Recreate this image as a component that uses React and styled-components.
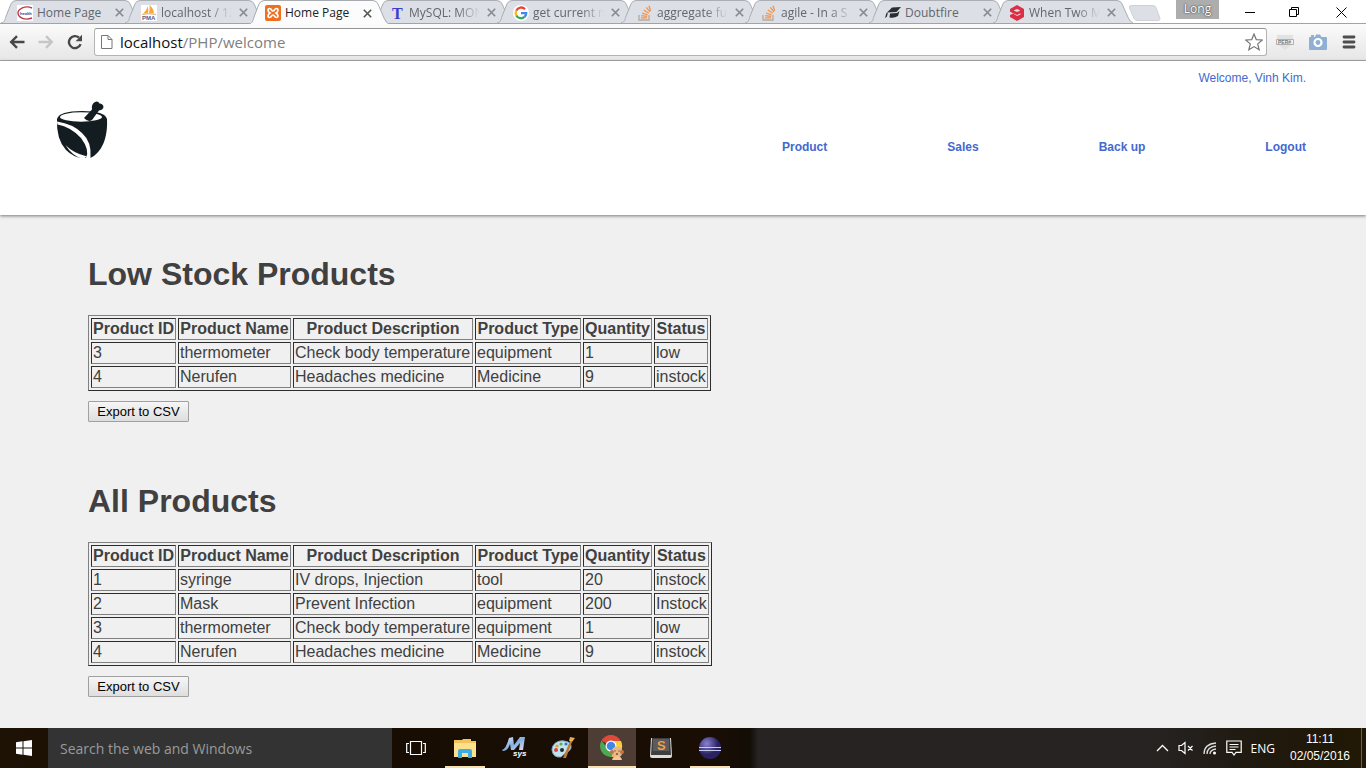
import React from "react";
import styled, { createGlobalStyle } from "styled-components";

const GlobalStyle = createGlobalStyle`
  * { box-sizing: border-box; }
  body { margin: 0; background: #f0f0f0; font-family: "Liberation Sans", Arial, sans-serif; }
`;

const ui = `"Open Sans", "Noto Sans", sans-serif`;

const Screen = styled.div`
  min-height: 100vh;
  display: flex;
  flex-direction: column;
`;

/* Browser window */
const TabStrip = styled.div`
  height: 24px;
  display: flex;
  padding-left: 9px;
  background: #fff;
  border-bottom: 1px solid #a3a3a3;
  font-family: ${ui};
`;

const TabBox = styled.div`
  position: relative;
  flex: 0 1 124px;
  min-width: 0;
  height: ${(p) => (p.$active ? 24 : 23)}px;
  display: flex;
  align-items: center;
  padding: 2px 7px 0 8px;
  gap: 4px;
  z-index: ${(p) => (p.$active ? 2 : 0)};
`;

const TabShape = styled.svg`
  position: absolute;
  left: -8px;
  top: 0;
  width: calc(100% + 16px);
  height: 100%;
  z-index: -1;
`;

const Favicon = styled.svg`
  flex: none;
  width: 16px;
  height: 16px;
`;

const TabTitle = styled.span`
  flex: 1;
  min-width: 0;
  overflow: hidden;
  white-space: nowrap;
  font-size: 12px;
  line-height: 16px;
  color: ${(p) => (p.$active ? "#222" : "#63666b")};
  mask-image: ${(p) => (p.$fade ? "linear-gradient(to right, #000 68%, transparent 100%)" : "none")};
`;

const IconButton = styled.button`
  flex: none;
  display: flex;
  align-items: center;
  justify-content: center;
  padding: 0;
  border: 0;
  background: transparent;
  width: ${(p) => p.$w || 14}px;
  height: ${(p) => p.$h || 16}px;
`;

const NewTab = styled.button`
  flex: none;
  width: 34px;
  height: 16px;
  margin: 5px 0 0 2px;
  padding: 0;
  border: 0;
  background: transparent;
`;

const WindowControls = styled.div`
  margin-left: auto;
  display: flex;
  align-items: flex-start;
`;

const ProfileButton = styled.button`
  width: 43px;
  height: 19px;
  margin-right: 8px;
  padding: 0 0 2px;
  border: 0;
  background: #adadad;
  color: #fff;
  font: 12px/16px ${ui};
  text-shadow: 0 0 2px #444, 0 0 1px #444;
`;

const Toolbar = styled.div`
  height: 37px;
  display: flex;
  align-items: center;
  padding: 0 10px 0 8px;
  background: linear-gradient(#fbfbfb, #e6e6e6);
  border-bottom: 1px solid #ababab;
`;

const NavGroup = styled.div`
  display: flex;
  gap: 11px;
  margin-right: 10px;
`;

const AddressBar = styled.div`
  flex: 1;
  height: 28px;
  display: flex;
  align-items: center;
  gap: 6px;
  padding: 0 3px 0 5px;
  background: #fff;
  border: 1px solid #b4b4b4;
  border-top-color: #969696;
  border-radius: 3px;
`;

const Address = styled.div`
  flex: 1;
  font: 15px/20px ${ui};
  color: #808080;
`;

const Host = styled.span`
  color: #111;
`;

const Extensions = styled.div`
  display: flex;
  gap: 15px;
  margin-left: 9px;
`;

/* Page */
const Page = styled.div`
  flex: 1;
  background: #f0f0f0;
  color: #404040;
`;

const Header = styled.header`
  height: 154px;
  display: flex;
  justify-content: space-between;
  padding: 9px 60px 0 56px;
  background: #fff;
  box-shadow: 0 1px 3px rgba(0, 0, 0, 0.5);
`;

const Logo = styled.a`
  display: block;
  width: 52px;
  height: 60px;
  margin-top: 30px;
`;

const HeaderSide = styled.div`
  display: flex;
  flex-direction: column;
  align-items: flex-end;
  gap: 53px;
`;

const HeaderLink = styled.a`
  font-size: 12px;
  line-height: 16px;
  font-weight: ${(p) => (p.$bold ? 700 : 400)};
  color: #4468cf;
  text-decoration: none;
`;

const Menu = styled.nav`
  display: flex;
  gap: 120px;
`;

const Main = styled.main`
  padding: 39px 88px 30px;
`;

const Section = styled.section`
  margin-bottom: 59px;
  &:last-child { margin-bottom: 0; }
`;

const Title = styled.h1`
  margin: 0 0 21px;
  font-size: 32px;
  line-height: 40px;
`;

const Grid = styled.table`
  border-collapse: separate;
  border-spacing: 2px;
  border: 1px solid;
  border-color: #808080 #2c2c2c #2c2c2c #808080;
  font-size: 16px;
  line-height: 18px;
  white-space: nowrap;

  th, td {
    padding: 1px;
    border: 1px solid;
    border-color: #2c2c2c #808080 #808080 #2c2c2c;
    text-align: left;
  }
`;

const HeadCell = styled.th`
  && {
    min-width: ${(p) => p.$w}px;
    text-align: center;
  }
`;

const ExportButton = styled.button`
  display: block;
  min-width: 101px;
  height: 21px;
  margin-top: 10px;
  padding: 0 7px;
  border: 1px solid #a0a0a0;
  border-radius: 1px;
  background: linear-gradient(#f6f6f6, #dedede);
  color: #000;
  font: 13px/18px "Liberation Sans", Arial, sans-serif;
`;

/* Taskbar */
const Taskbar = styled.footer`
  height: 40px;
  display: flex;
  align-items: stretch;
  background: linear-gradient(to right, #1d1204 0, #170d02 380px, #1a0e04 700px, #130d07 750px, #262322 758px, #262322 1150px, #1f190e 1260px, #211804 100%);
  font-family: ${ui};
`;

const SearchBox = styled.input`
  width: 344px;
  min-width: 0;
  padding: 1px 12px 0;
  border: 0;
  border-radius: 0;
  background: #333;
  font: 14px/20px ${ui};
  &::placeholder { color: #9a9a9a; opacity: 1; }
`;

const Apps = styled.div`
  display: flex;
  gap: 1px;
`;

const AppButton = styled.button`
  width: ${(p) => (p.$active ? 48 : 40)}px;
  margin: 0 ${(p) => (p.$active ? 0 : 4)}px;
  padding: 2px 0 0;
  display: flex;
  align-items: center;
  justify-content: center;
  border: 0;
  border-bottom: 2px solid ${(p) => (p.$open ? "#f7dfae" : "transparent")};
  background: ${(p) => (p.$active ? "#4e3d35" : "transparent")};
`;

const Tray = styled.div`
  margin-left: auto;
  display: flex;
  align-items: center;
  gap: 9px;
  color: #fff;
  font-size: 12px;
  line-height: 17px;
`;

const Clock = styled.time`
  width: 72px;
  font-family: "Liberation Sans", Arial, sans-serif;
  text-align: center;
`;

const ShowDesktop = styled.button`
  width: 5px;
  height: 40px;
  margin-left: -4px;
  padding: 0;
  border: 0;
  border-left: 1px solid #6a6452;
  background: transparent;
`;

const favicons = {
  health: (
    <>
      <rect width="16" height="16" fill="#fff" />
      <path d="M15 3C8 0 1 4 1 8s6 8 14 5" fill="none" stroke="#c03a45" strokeWidth="1.400" />
      <text x="3" y="10" fontSize="4" fontWeight="700" fill="#2b4590" fontFamily="Liberation Sans">health</text>
    </>
  ),
  pma: (
    <>
      <rect width="16" height="16" fill="#fff" />
      <path d="M2 8.500Q6 5 6.500 1q1.500 4 .5 7.500zM8 8.500Q9 4 8.500 0 13 4 13 8.500z" fill="#f5a742" />
      <path d="M1 9.500q7-1.500 14 0" stroke="#d9b285" fill="none" />
      <text x="1" y="15" fontSize="6" fontWeight="700" fill="#555a85" fontFamily="Liberation Sans">PMA</text>
    </>
  ),
  xampp: (
    <>
      <rect width="16" height="16" rx="2" fill="#ee6f20" />
      <path d="M4.500 3.500C7 3.500 6 6 8 6s1-2.500 3.500-2.500c2 0 2 3-.5 4.500 2.500 1.500 2.500 4.500.5 4.500C9 12.500 10 10 8 10s-1 2.500-3.500 2.500c-2 0-2-3 .5-4.500-2.500-1.500-2.500-4.500-.5-4.500z" fill="none" stroke="#fff" strokeWidth="1.700" />
    </>
  ),
  tutorial: <text x="3" y="14" fontSize="16" fontWeight="700" fill="#4038cf" fontFamily="Liberation Serif">T</text>,
  google: (
    <>
      <circle cx="8" cy="8" r="8" fill="#fff" />
      <g fill="none" strokeWidth="2.300">
        <path d="M12 4.300A5.200 5.200 0 0 0 3.300 5.600" stroke="#ea4335" />
        <path d="M3.300 5.600a5.200 5.200 0 0 0 0 4.800" stroke="#fbbc05" />
        <path d="M3.300 10.400a5.200 5.200 0 0 0 8.200 1.500" stroke="#34a853" />
        <path d="M11.500 11.900A5 5 0 0 0 13.200 8.200H8" stroke="#4285f4" />
      </g>
    </>
  ),
  stack: (
    <g fill="none" strokeWidth="1.300">
      <path d="M2 10v5h10v-5" stroke="#b5aaa2" />
      <path d="M4 12.800h6M4.200 10.600l6 .7M5 8l5.600 1.800M6.800 5l5 3.300M9.300 2.300l3.800 4.500M12 .8l1.600 5" stroke="#f0944d" />
    </g>
  ),
  cap: (
    <g fill="#2b2d30">
      <path d="M2 7.500 7 2.500 16 2l-4.500 5z" />
      <path d="M5 8.500l7-.4 2.500-2-1.500 5q-4 2.400-8.500 1.400zM1.500 7.800h1.300l-.8 3.700-2 1.500z" />
    </g>
  ),
  gag: (
    <path
      fillRule="evenodd"
      d="M8 0l7 4v8l-7 4-7-4v-2l3-1.400L8 11l3.500-1.600V8.200L8 10 1 6.800V4zM8 4 5 5.200v.6L8 7l3-1.200v-.6z"
      fill="#dc2f45"
    />
  ),
};

const tabs = [
  { icon: "health", title: "Home Page" },
  { icon: "pma", title: "localhost / 12", fade: true },
  { icon: "xampp", title: "Home Page", active: true },
  { icon: "tutorial", title: "MySQL: MON", fade: true },
  { icon: "google", title: "get current m", fade: true },
  { icon: "stack", title: "aggregate fu", fade: true },
  { icon: "stack", title: "agile - In a S", fade: true },
  { icon: "cap", title: "Doubtfire" },
  { icon: "gag", title: "When Two M", fade: true },
];

function Tab({ icon, title, active, fade }) {
  return (
    <TabBox $active={active}>
      <TabShape viewBox="0 0 140 24" preserveAspectRatio="none">
        <path
          d="M0 24C4 23 4 20 5 17L10 4Q11 1 15 .5H124Q128 1 129 4l6 14q2 5 5 6"
          fill={active ? "#fcfcfc" : "#dcdfe6"}
          stroke="#a8abb0"
        />
      </TabShape>
      <Favicon viewBox="0 0 16 16">{favicons[icon]}</Favicon>
      <TabTitle $active={active} $fade={fade}>{title}</TabTitle>
      <IconButton aria-label="Close tab">
        <svg width="9" height="9" viewBox="0 0 9 9">
          <path d="M.8.8l7.400 7.400M8.200.8.8 8.200" stroke={active ? "#555" : "#85888d"} strokeWidth="1.600" />
        </svg>
      </IconButton>
    </TabBox>
  );
}

function Browser() {
  return (
    <div>
      <TabStrip>
        {tabs.map((t, i) => <Tab key={i} {...t} />)}
        <NewTab aria-label="New tab">
          <svg width="34" height="16" viewBox="0 0 34 16">
            <path d="M4 .5h22q2 0 3 2l4 11q0 2-2 2H11q-3 0-4-2L2.500 3Q2 .5 4 .5z" fill="#dcdfe6" stroke="#cfd1d4" />
          </svg>
        </NewTab>
        <WindowControls>
          <ProfileButton>Long</ProfileButton>
          <IconButton $w={45} $h={24} aria-label="Minimize">
            <svg width="10" height="10"><path d="M0 5.500h10" stroke="#000" /></svg>
          </IconButton>
          <IconButton $w={45} $h={24} aria-label="Restore">
            <svg width="11" height="11" fill="none" stroke="#000"><path d="M.5 2.500h7v7h-7zM2.500 2.500v-2h7v7h-2" /></svg>
          </IconButton>
          <IconButton $w={49} $h={24} aria-label="Close">
            <svg width="11" height="11" stroke="#000"><path d="M.5.5l10 10M10.500.5l-10 10" /></svg>
          </IconButton>
        </WindowControls>
      </TabStrip>
      <Toolbar>
        <NavGroup>
          <IconButton $w={18} $h={18} aria-label="Back">
            <svg width="16" height="14" fill="none" stroke="#484848" strokeWidth="2.400"><path d="M15.500 7H2.500M8 1.200 2.200 7 8 12.800" /></svg>
          </IconButton>
          <IconButton $w={18} $h={18} aria-label="Forward">
            <svg width="16" height="14" fill="none" stroke="#c6c6c6" strokeWidth="2.400"><path d="M.5 7h13M8 1.200 13.800 7 8 12.800" /></svg>
          </IconButton>
          <IconButton $w={18} $h={18} aria-label="Reload">
            <svg width="16" height="16" viewBox="0 0 16 16"><path d="M13.600 10.200A6 6 0 1 1 12 3.700" fill="none" stroke="#484848" strokeWidth="2.400" /><path d="M15 .8v6.400H8.600z" fill="#484848" /></svg>
          </IconButton>
        </NavGroup>
        <AddressBar>
          <svg width="14" height="16" fill="#fff" stroke="#777"><path d="M1.500 1.500h6.500l4 4v9H1.500zM8 1.500v4h4" /></svg>
          <Address><Host>localhost</Host>/PHP/welcome</Address>
          <IconButton $w={18} $h={18} aria-label="Bookmark">
            <svg width="18" height="18" viewBox="0 0 18 18"><path d="M9 1l2.300 5.600 6 .4-4.600 3.900 1.500 5.900L9 13.600l-5.200 3.200 1.500-5.900L.7 7l6-.4z" fill="#fff" stroke="#777" strokeWidth="1.200" /></svg>
          </IconButton>
        </AddressBar>
        <Extensions>
          <IconButton $w={18} $h={18} aria-label="Extension">
            <svg width="18" height="18"><path d="M1 2h16v9l-8 6-8-6z" fill="#e2e2e2" /><path d="M.5 6.500h17v5H.5z" fill="#f2f2f2" stroke="#b0b0b0" /><text x="2" y="11" fontSize="5" fontWeight="700" fill="#777" fontFamily="Liberation Sans">PER#</text></svg>
          </IconButton>
          <IconButton $w={18} $h={18} aria-label="Capture">
            <svg width="18" height="18"><path d="M0 5q0-1 1-1h1V2h3v2h1l1-2.500h4L12.500 4H17q1 0 1 1v11q0 1-1 1H1q-1 0-1-1z" fill="#8fb0d3" /><circle cx="9" cy="9.500" r="3.500" fill="none" stroke="#fff" strokeWidth="2.200" /></svg>
          </IconButton>
          <IconButton $w={14} $h={18} aria-label="Menu">
            <svg width="14" height="14" stroke="#4d4d4d" strokeWidth="2.800" strokeLinecap="round"><path d="M2 2h10M2 7h10M2 12h10" /></svg>
          </IconButton>
        </Extensions>
      </Toolbar>
    </div>
  );
}

const columns = [
  { label: "Product ID", width: 85 },
  { label: "Product Name", width: 113 },
  { label: "Product Description", width: 180 },
  { label: "Product Type", width: 106 },
  { label: "Quantity", width: 69 },
  { label: "Status", width: 54 },
];
const lowStock = [
  ["3", "thermometer", "Check body temperature", "equipment", "1", "low"],
  ["4", "Nerufen", "Headaches medicine", "Medicine", "9", "instock"],
];
const allProducts = [
  ["1", "syringe", "IV drops, Injection", "tool", "20", "instock"],
  ["2", "Mask", "Prevent Infection", "equipment", "200", "Instock"],
  ...lowStock,
];

function ProductSection({ title, rows }) {
  return (
    <Section>
      <Title>{title}</Title>
      <Grid>
        <thead>
          <tr>{columns.map((c) => <HeadCell key={c.label} scope="col" $w={c.width}>{c.label}</HeadCell>)}</tr>
        </thead>
        <tbody>
          {rows.map((r) => <tr key={r[0]}>{r.map((c, i) => <td key={i}>{c}</td>)}</tr>)}
        </tbody>
      </Grid>
      <ExportButton>Export to CSV</ExportButton>
    </Section>
  );
}

function MortarLogo() {
  return (
    <svg width="52" height="60" viewBox="0 0 52 60">
      <path d="M1 19Q3 11 26 11T51 19C52 37 46 53 34 58H26Q17 57 10 50 0 39 1 19z" fill="#131c20" />
      <ellipse cx="25" cy="17" rx="21" ry="4.700" fill="#fff" />
      <path d="M28 18 36 9.500Q35 4 39 2q3-1.500 4.500 1.500Q47 3.500 47.500 7q-.5 3-4.500 3.500L36 20q-4 2.500-8-2z" fill="#131c20" />
      <path d="M1 21.500Q17 24 26 33 36 42 34.500 58H30Q34 50 25 38 15 27 1.500 24.500z" fill="#fff" />
      <path d="M9.500 45Q17 53 31 56.500L27 59Q16 56 9.500 45z" fill="#fff" />
    </svg>
  );
}

const appIcons = {
  taskview: <svg width="20" height="16" fill="none" stroke="#fff" strokeWidth="1.200"><path d="M4.500 1.500h11v13h-11zM3 3.500H.7v9H3M17 3.500h2.300v9H17" /></svg>,
  explorer: (
    <svg width="22" height="20"><path d="M0 2h8l1-1h8v2h5v16H0z" fill="#f0c45a" /><path d="M0 5h22v14H0z" fill="#fce08d" /><path d="M4 20v-7q0-2 2-2h10q2 0 2 2v7h-4v-5H8v5z" fill="#3aaee0" /></svg>
  ),
  msys: (
    <svg width="26" height="24" viewBox="0 0 26 24">
      <defs><linearGradient id="msys" x1="0" x2="1" y2="1"><stop stopColor="#e9f2ff" /><stop offset=".5" stopColor="#83aee0" /><stop offset="1" stopColor="#f2dcef" /></linearGradient></defs>
      <path d="M1 14Q5 13 8 2l4-1 1 8 6-8h5l-2 13h-4l1-7-6 7h-3L9 8Q7 15 2 15z" fill="url(#msys)" />
      <text x="12" y="20" fontSize="8" fontWeight="700" fontStyle="italic" fill="#fff" fontFamily="Liberation Sans">sys</text>
    </svg>
  ),
  paint: (
    <svg width="24" height="24"><path d="M1 14C1 8 7 4 13 5q8 1 7 7-1 3-4 4-3 2-6 5-8 1-9-7z" fill="#c3e2ee" stroke="#7fa9bd" /><circle cx="5" cy="14" r="2" fill="#d7443f" /><circle cx="6" cy="10" r="1.600" fill="#e0a036" /><circle cx="10" cy="8" r="1.600" fill="#5cae4a" /><circle cx="15" cy="8" r="1.600" fill="#3a75c9" /><circle cx="11" cy="14" r="2" fill="#1d2a30" /><path d="M12 22 19 5l2 1-6 16z" fill="#bd7b35" /><path d="M18 5l1-4 5 1-3 4z" fill="#e8ad58" /></svg>
  ),
  chrome: (
    <svg width="24" height="26" viewBox="0 0 24 26">
      <path d="M11 11 1.500 5.500A11 11 0 0 1 20.500 5.500z" fill="#e04a3a" />
      <path d="M11 11V6h10a11 11 0 0 1-10 16l5-8z" fill="#fbcf38" />
      <path d="M11 11l4 3-4 8A11 11 0 0 1 1.500 5.500L7 13z" fill="#4aa953" />
      <circle cx="11" cy="11" r="5.500" fill="#fff" /><circle cx="11" cy="11" r="4.300" fill="#4486e8" />
      <circle cx="17" cy="17" r="5.500" fill="#e9b684" /><circle cx="12" cy="17" r="2" fill="#bd7742" /><circle cx="22" cy="17" r="2" fill="#bd7742" />
      <path d="M12 25q1-4 5-4t5 4z" fill="#f0c69a" /><path d="M15 15.500v1M19 15.500v1M16 19h2" stroke="#412419" />
    </svg>
  ),
  sublime: (
    <svg width="24" height="22"><path d="M2 1h20l1 18q0 2-2 2H3q-2 0-2-2z" fill="#ddd" /><path d="M3 1h18l1 17H2z" fill="#3f3f3f" /><rect x="4" y="2" width="16" height="12" fill="#5c5b5b" /><text x="8" y="13" fontSize="13" fontWeight="700" fill="#f29b48" fontFamily="Liberation Sans">S</text></svg>
  ),
  eclipse: (
    <svg width="24" height="24"><defs><radialGradient id="ecl" cx=".35" cy=".3"><stop stopColor="#8a83d3" /><stop offset="1" stopColor="#2b2361" /></radialGradient></defs><circle cx="12" cy="12" r="11" fill="url(#ecl)" /><path d="M1 11.500h22M1 14.500h22" stroke="#c9c9ef" /></svg>
  ),
};

const apps = [
  { id: "taskview", label: "Task View" },
  { id: "explorer", label: "File Explorer", open: true },
  { id: "msys", label: "MSYS" },
  { id: "paint", label: "Paint" },
  { id: "chrome", label: "Chrome", open: true, active: true },
  { id: "sublime", label: "Sublime Text" },
  { id: "eclipse", label: "Eclipse", open: true },
];

export default function App() {
  return (
    <Screen>
      <GlobalStyle />
      <Browser />
      <Page>
        <Header>
          <Logo href="#" aria-label="Home"><MortarLogo /></Logo>
          <HeaderSide>
            <HeaderLink href="#">Welcome, Vinh Kim.</HeaderLink>
            <Menu>
              {["Product", "Sales", "Back up", "Logout"].map((m) => <HeaderLink key={m} href="#" $bold>{m}</HeaderLink>)}
            </Menu>
          </HeaderSide>
        </Header>
        <Main>
          <ProductSection title="Low Stock Products" rows={lowStock} />
          <ProductSection title="All Products" rows={allProducts} />
        </Main>
      </Page>
      <Taskbar>
        <IconButton $w={48} $h={40} aria-label="Start">
          <svg width="16" height="16" fill="#fff"><path d="M0 2.300 6.500 1.300V7.500H0zM7.500 1.200 16 0v7.500H7.500zM0 8.500h6.500v6.200L0 13.700zM7.500 8.500H16V16l-8.500-1.200z" /></svg>
        </IconButton>
        <SearchBox type="text" aria-label="Search" placeholder="Search the web and Windows" />
        <Apps>
          {apps.map((a) => <AppButton key={a.id} $open={a.open} $active={a.active} aria-label={a.label}>{appIcons[a.id]}</AppButton>)}
        </Apps>
        <Tray>
          <svg width="13" height="8" fill="none" stroke="#fff" strokeWidth="1.300"><path d="M1 7l5.500-5.500L12 7" /></svg>
          <svg width="16" height="14" fill="none" stroke="#fff" strokeWidth="1.200"><path d="M1 4.500h2.500L7 1.500v11L3.500 9.500H1zM10 5l4.500 4.500M14.500 5 10 9.500" /></svg>
          <svg width="14" height="14" fill="none" stroke="#ddd" strokeWidth="1.300"><path d="M1 13Q1 3 13 2M4 13q0-7 9-8M7 13q0-4 6-5" /><circle cx="11.500" cy="12" r="1.500" fill="#fff" stroke="none" /></svg>
          <svg width="16" height="16" fill="none" stroke="#fff" strokeWidth="1.200"><path d="M.8 1h14.400v11.400H10L8 15l-2-2.600H.8zM3.500 4.500h9M3.500 7h9M3.500 9.500h6" /></svg>
          <span>ENG</span>
          <Clock>11:11<br />02/05/2016</Clock>
          <ShowDesktop aria-label="Show desktop" />
        </Tray>
      </Taskbar>
    </Screen>
  );
}
